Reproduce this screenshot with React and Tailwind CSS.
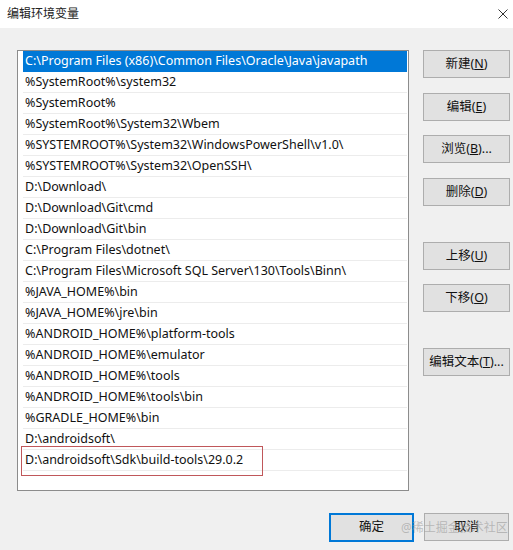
import React from "react";

const paths = [
  "C:\\Program Files (x86)\\Common Files\\Oracle\\Java\\javapath",
  "%SystemRoot%\\system32",
  "%SystemRoot%",
  "%SystemRoot%\\System32\\Wbem",
  "%SYSTEMROOT%\\System32\\WindowsPowerShell\\v1.0\\",
  "%SYSTEMROOT%\\System32\\OpenSSH\\",
  "D:\\Download\\",
  "D:\\Download\\Git\\cmd",
  "D:\\Download\\Git\\bin",
  "C:\\Program Files\\dotnet\\",
  "C:\\Program Files\\Microsoft SQL Server\\130\\Tools\\Binn\\",
  "%JAVA_HOME%\\bin",
  "%JAVA_HOME%\\jre\\bin",
  "%ANDROID_HOME%\\platform-tools",
  "%ANDROID_HOME%\\emulator",
  "%ANDROID_HOME%\\tools",
  "%ANDROID_HOME%\\tools\\bin",
  "%GRADLE_HOME%\\bin",
  "D:\\androidsoft\\",
  "D:\\androidsoft\\Sdk\\build-tools\\29.0.2",
];

const font = {
  fontFamily: '"Noto Sans", "Noto Sans CJK SC", sans-serif',
};

function Btn({ label, hot, tail, className = "" }) {
  return (
    <div
      className={`w-[87px] h-[28px] flex items-center justify-center bg-[#e1e1e1] border border-[#adadad] text-[12.5px] text-[#111] ${className}`}
    >
      <span>
        {label}(<span className="underline">{hot}</span>){tail}
      </span>
    </div>
  );
}

export default function App() {
  return (
    <div
      className="w-[513px] h-[550px] bg-[#f0f0f0] relative overflow-hidden"
      style={font}
    >
      {/* title bar */}
      <div className="h-[28px] bg-white flex items-center justify-between pl-[7px] pr-[4px]">
        <span className="text-[12px] text-[#222]">编辑环境变量</span>
        <svg width="10" height="10" viewBox="0 0 10 10" className="mr-[1px]">
          <path d="M0.5 0.5 L9.5 9.5 M9.5 0.5 L0.5 9.5" stroke="#333" strokeWidth="1" />
        </svg>
      </div>

      <div className="flex pt-[22px] pl-[17px]">
        {/* path list */}
        <div className="w-[392px] h-[441px] bg-white border border-[#8c8c8c] pl-[5px] pr-[1px]">
          {paths.map((p, i) => {
            const selected = i === 0;
            const last = i === paths.length - 1;
            return (
              <div
                key={i}
                className={`relative h-[21px] flex items-center pl-[2px] text-[12.5px] leading-none border-b ${
                  selected
                    ? "bg-[#0078d7] text-white border-[#0078d7]"
                    : "text-[#111] border-[#ececec]"
                }`}
              >
                <span className="whitespace-nowrap">{p}</span>
                {last && (
                  <div className="absolute left-[-2px] top-[-4px] w-[242px] h-[30px] border border-[#c0575a]" />
                )}
              </div>
            );
          })}
        </div>

        {/* action buttons */}
        <div className="ml-[14px] flex flex-col">
          <Btn label="新建" hot="N" />
          <Btn label="编辑" hot="E" className="mt-[15px]" />
          <Btn label="浏览" hot="B" tail="..." className="mt-[14px]" />
          <Btn label="删除" hot="D" className="mt-[15px]" />
          <Btn label="上移" hot="U" className="mt-[36px]" />
          <Btn label="下移" hot="O" className="mt-[14px]" />
          <Btn label="编辑文本" hot="T" tail="..." className="mt-[36px]" />
        </div>
      </div>

      {/* dialog buttons */}
      <div className="flex justify-end gap-[10px] pr-[4px] mt-[22px]">
        <div className="w-[85px] h-[29px] flex items-center justify-center bg-[#e1e1e1] border-2 border-[#0078d7] text-[12.5px] text-[#111]">
          确定
        </div>
        <div className="w-[85px] h-[28px] flex items-center justify-center bg-[#e1e1e1] border border-[#adadad] text-[12.5px] text-[#111]">
          取消
        </div>
      </div>

      {/* watermark */}
      <div className="absolute left-[401px] top-[519px] text-[12px] text-[#9a9a9a]/60 whitespace-nowrap">
        @稀土掘金技术社区
      </div>
    </div>
  );
}
